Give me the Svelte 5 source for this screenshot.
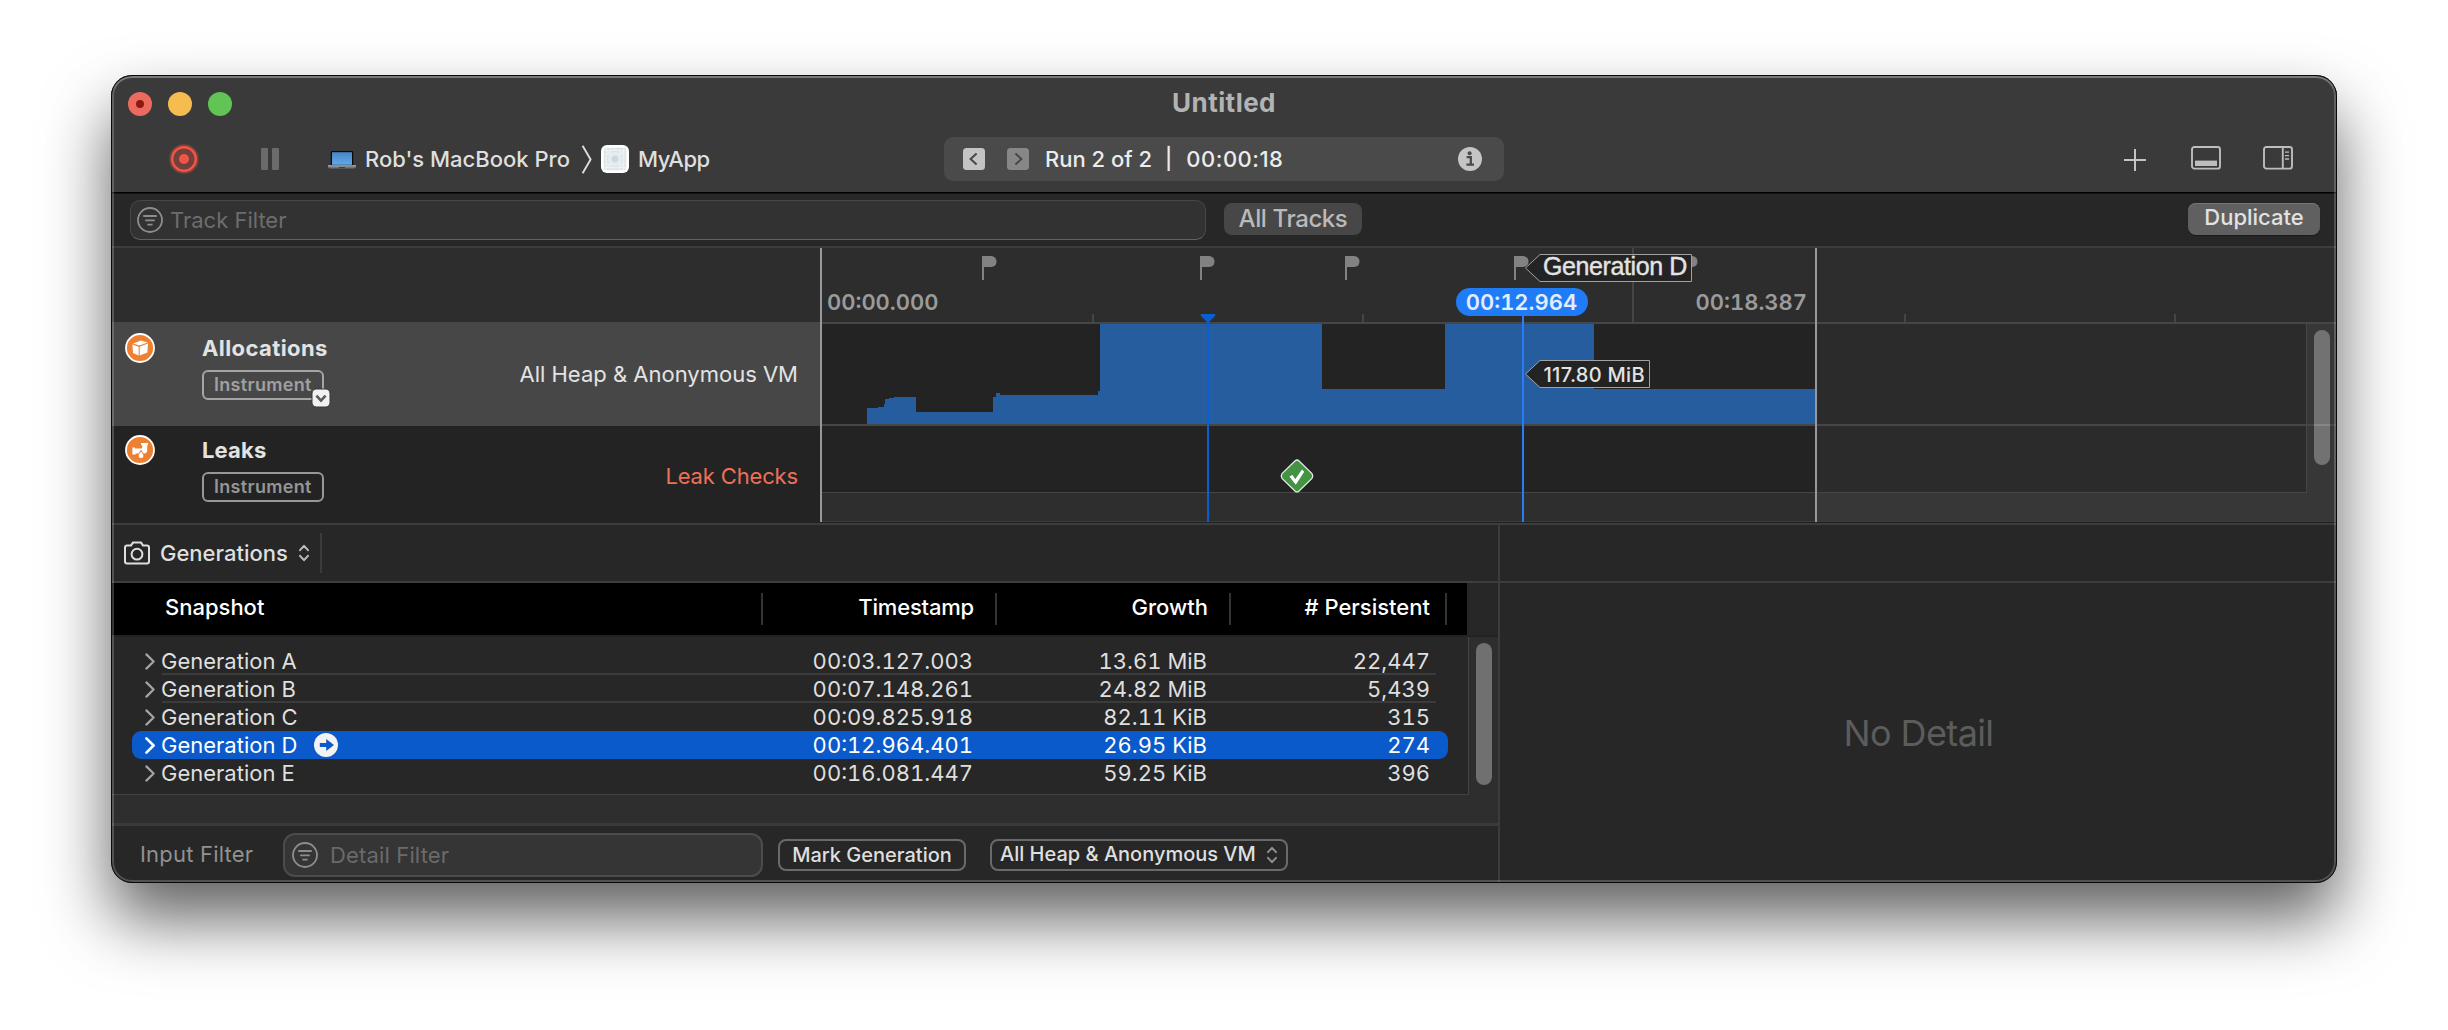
<script>
  const flags = [982, 1200, 1345, 1514, 1683];
  const ticks = [1092, 1362, 1904, 2174];

  // Outline of the heap usage graph, in canvas coordinates.
  const usage = [
    [867, 424], [867, 408], [878, 408], [878, 407], [884, 407], [884, 404], [885, 404], [885, 399],
    [889, 399], [889, 398], [894, 398], [894, 397], [916, 397], [916, 412], [993, 412], [993, 397],
    [996, 397], [996, 393], [1000, 393], [1000, 395], [1098, 395], [1098, 391], [1100, 391], [1100, 324],
    [1322, 324], [1322, 389], [1445, 389], [1445, 324], [1594, 324], [1594, 389], [1816, 389], [1816, 424]
  ].map((p) => p.join(',')).join(' ');

  const rows = [
    { name: 'Generation A', time: '00:03.127.003', growth: '13.61 MiB', count: '22,447', line: true },
    { name: 'Generation B', time: '00:07.148.261', growth: '24.82 MiB', count: '5,439', line: true },
    { name: 'Generation C', time: '00:09.825.918', growth: '82.11 KiB', count: '315' },
    { name: 'Generation D', time: '00:12.964.401', growth: '26.95 KiB', count: '274', selected: true },
    { name: 'Generation E', time: '00:16.081.447', growth: '59.25 KiB', count: '396' }
  ];
</script>

{#snippet filterIcon(size)}
  <svg class="filter-icon" width={size} height={size} viewBox="0 0 26 26" fill="none" stroke="#8d8d8d">
    <circle cx="13" cy="13" r="12" stroke-width="1.8" />
    <path d="M6.2 9H19.8M8.2 13.4H17.8M10.4 17.6H15.6" stroke-width="1.9" />
  </svg>
{/snippet}

{#snippet upDown(color)}
  <svg width="12" height="18" viewBox="0 0 12 18" fill="none" stroke={color} stroke-width="2" stroke-linecap="round" stroke-linejoin="round">
    <path d="M2 6.2L6 1.8L10 6.2M2 11.8L6 16.2L10 11.8" />
  </svg>
{/snippet}

<main class="window">
  <header class="toolbar">
    <div class="title-row">
      <div class="lights"><i class="red"></i><i class="yellow"></i><i class="green"></i></div>
      <h1>Untitled</h1>
    </div>
    <div class="tool-row">
      <div class="tool-left">
        <svg class="record" width="30" height="30" viewBox="0 0 30 30">
          <circle cx="15" cy="15" r="14.8" fill="#7a423c" />
          <circle cx="15" cy="15" r="11.8" fill="#70413c" stroke="#f05545" stroke-width="2.4" />
          <circle cx="15" cy="15" r="5" fill="#f05545" />
        </svg>
        <svg class="pause" width="18" height="22" viewBox="0 0 18 22" fill="#6b6b6b">
          <rect width="7" height="22" rx="1.2" /><rect x="11" width="7" height="22" rx="1.2" />
        </svg>
        <svg class="laptop" width="28" height="18" viewBox="0 0 28 18">
          <defs><linearGradient id="screen" x1="0" y1="0" x2="0" y2="1"><stop offset="0" stop-color="#4587c6" /><stop offset="1" stop-color="#64a8e8" /></linearGradient></defs>
          <rect x="2.8" y="0" width="22.4" height="15" rx="1.2" fill="#0a0a0c" />
          <rect x="4" y="1.2" width="20" height="12.6" fill="url(#screen)" />
          <path d="M0 14.4H28V16Q27.4 17.6 25.6 17.6H2.4Q.6 17.6 0 16Z" fill="#6f7376" />
          <path d="M0 14.2H28V15.6H0Z" fill="#a6aaad" /><path d="M11 16H17V17H11Z" fill="#3d4043" />
        </svg>
        <span class="device">Rob's MacBook Pro</span>
        <svg class="crumb" width="12" height="29" viewBox="0 0 12 29" fill="none" stroke="#dcdcdc" stroke-width="1.9"><path d="M1.6 .8L9.6 14.5L1.6 28.2" /></svg>
        <svg class="app-icon" width="28" height="28" viewBox="0 0 28 28">
          <rect width="28" height="28" rx="6" fill="#fff" />
          <rect x="2.8" y="2.8" width="22.4" height="22.4" rx="3" fill="#dbe4e7" />
          <g fill="none" stroke="#eff4f5" stroke-width=".8">
            <circle cx="14" cy="14" r="9.4" /><circle cx="14" cy="14" r="6.4" /><circle cx="14" cy="14" r="4" />
            <path d="M3 9H25M3 19H25M9 3V25M19 3V25M3 3L25 25M25 3L3 25M5.5 3V25M22.5 3V25M3 5.5H25M3 22.5H25" />
          </g>
          <circle cx="14" cy="14" r="3.4" fill="#cddadd" />
        </svg>
        <span class="app">MyApp</span>
      </div>
      <div class="run-box">
        <svg width="22" height="22" viewBox="0 0 22 22" fill="none"><rect width="22" height="22" rx="3.5" fill="#c3c3c3" /><path d="M13.6 5.4L7.6 11L13.6 16.6" stroke="#474747" stroke-width="2" /></svg>
        <svg class="next" width="22" height="22" viewBox="0 0 22 22" fill="none"><rect width="22" height="22" rx="3.5" fill="#878787" /><path d="M8.4 5.4L14.4 11L8.4 16.6" stroke="#474747" stroke-width="2" /></svg>
        <span class="run">Run 2 of 2</span><span class="bar">|</span><span class="clock">00:00:18</span>
        <svg class="info" width="24" height="24" viewBox="0 0 24 24"><circle cx="12" cy="12" r="12" fill="#c5c5c5" /><circle cx="11.6" cy="6.2" r="2" fill="#4a4a4a" /><path d="M8.6 10.2H12.8V17.4M8.4 17.6H16" fill="none" stroke="#4a4a4a" stroke-width="2.3" /></svg>
      </div>
      <div class="tool-right">
        <svg width="22" height="22" viewBox="0 0 22 22" stroke="#c4c4c4" stroke-width="2"><path d="M11 0V22M0 11H22" /></svg>
        <svg class="panel" width="30" height="24" viewBox="0 0 30 24"><rect x="1" y="1" width="28" height="21.6" rx="2.4" fill="none" stroke="#bdbdbd" stroke-width="1.9" /><rect x="4" y="14.6" width="22" height="5.4" fill="#bdbdbd" /></svg>
        <svg class="panel" width="30" height="24" viewBox="0 0 30 24" fill="none" stroke="#bdbdbd" stroke-width="1.9"><rect x="1" y="1" width="28" height="21.6" rx="2.4" /><path d="M19.8 1V22.6" /><path d="M22 6.2H26M22 9.6H26M22 13H26" stroke-width="1.3" /></svg>
      </div>
    </div>
  </header>

  <div class="filter-row">
    <div class="track-filter">{@render filterIcon(26)}<span>Track Filter</span></div>
    <button class="all-tracks">All Tracks</button>
    <button class="duplicate">Duplicate</button>
  </div>

  <section class="timeline">
    <div class="tracks">
      <div class="ruler-space"></div>
      <div class="track allocations">
        <svg width="30" height="30" viewBox="0 0 30 30">
          <circle cx="15" cy="15" r="14" fill="#ee8032" stroke="#fff" stroke-width="1.8" />
          <path d="M8 10.6L16 7.6L22.6 9.4L14.4 12.6Z" fill="#fff" />
          <path d="M7.4 11.6L13.6 13.7V22.4L8 19.9Z" fill="#fff" /><path d="M14.7 13.7L23 10.6L22.4 19.4L14.7 22.4Z" fill="#fff" />
        </svg>
        <div class="track-name">
          <h2>Allocations</h2>
          <span class="badge">Instrument
            <svg class="badge-menu" width="20" height="20" viewBox="0 0 20 20"><rect x="1" y="1" width="18" height="18" rx="4.5" fill="#f1f1f1" stroke="#393939" stroke-width="1" /><path d="M5.4 7.6L10 12.6L14.6 7.6" fill="none" stroke="#5a5a5a" stroke-width="2.6" /></svg>
          </span>
        </div>
        <span class="track-detail heap">All Heap &amp; Anonymous VM</span>
      </div>
      <div class="track leaks">
        <svg width="30" height="30" viewBox="0 0 30 30">
          <circle cx="15" cy="15" r="14" fill="#ee8032" stroke="#fff" stroke-width="1.8" />
          <path d="M16.2 8H23V10.2H22.2V15.6Q22.2 18.4 19.4 18.4H18.6L16 14.8L13.4 18.4H10.6V19.6H7.4V12.4H9.8V13.6H16.4Q17.2 13.6 17.2 12.8V10.2H16.2Z" fill="#fff" />
          <path d="M16 15.8Q13.2 19.4 13.2 21Q13.4 23.4 16 23.6Q18.8 23.4 18.8 21Q18.8 19.4 16 15.8Z" fill="#fff" stroke="#ee8032" stroke-width=".8" />
        </svg>
        <div class="track-name"><h2>Leaks</h2><span class="badge">Instrument</span></div>
        <span class="track-detail checks">Leak Checks</span>
      </div>
    </div>

    <svg class="canvas" width="1517" height="275" viewBox="820 248 1517 275">
      <rect x="820" y="248" width="1517" height="74" fill="#2d2d2d" />
      <rect x="820" y="322" width="997" height="170" fill="#232323" />
      <rect x="1817" y="322" width="489" height="170" fill="#2b2b2b" />
      <rect x="820" y="492" width="997" height="30" fill="#2e2e2e" />
      <path d="M1817 492H2306V322H2337V522H1817Z" fill="#373737" />
      <path d="M820 492.5H2306.5V324" fill="none" stroke="#464646" />
      <path d="M820 521.5H2337" stroke="#3b3b3b" /><path d="M820 522.5H2337" stroke="#202020" />
      {#each ticks as x}<rect {x} y="314" width="2" height="8" fill="#454545" />{/each}
      <rect x="1632" y="248" width="2" height="74" fill="#454545" />
      <rect x="820" y="322" width="1517" height="2" fill="#464646" />
      <rect x="2314" y="330" width="16" height="135" rx="8" fill="#727272" />
      <polygon points={usage} fill="#265d9f" shape-rendering="crispEdges" />
      <rect x="820" y="424" width="1517" height="2" fill="#464646" />
      <rect x="2314" y="424" width="16" height="2" fill="#868686" />
      {#each flags as x}
        <path d="M{x} 256h9q5.5 .5 5.5 5.5t-5.5 5.5h-7v13h-2z" fill="#828282" />
      {/each}
      <text class="time" x="827" y="310">00:00.000</text>
      <text class="time" x="1807" y="310" text-anchor="end">00:18.387</text>
      <rect x="1207" y="320" width="2" height="202" fill="#0b5ed2" />
      <path d="M1201 314H1215V316L1208 323L1201 316Z" fill="#0b5ed2" />
      <g>
        <path d="M1295.2 460.8Q1297 459.2 1298.8 460.8L1312 473.6Q1313.6 476 1312 478.4L1298.8 491.2Q1297 492.6 1295.2 491.2L1282 478.4Q1280.4 476 1282 473.6Z" fill="#449343" stroke="#e9f3e9" stroke-width="1.2" />
        <path d="M1289.4 476.4L1292.6 475L1295.2 479.2L1302 469.6L1304.2 471.8L1295.8 484.8Z" fill="#fff" />
      </g>
      <rect x="820" y="248" width="2" height="274" fill="#98989a" />
      <rect x="1815" y="248" width="2" height="274" fill="#98989c" />
      <rect x="1522" y="314" width="2" height="208" fill="#2a7df4" />
      <rect x="1456" y="288" width="132" height="28" rx="14" fill="#207bf7" />
      <text class="time now" x="1521.5" y="310" text-anchor="middle">00:12.964</text>
      <path d="M1525.5 268L1540 254.5H1691.5V281.5H1540Z" fill="#232323" stroke="#a2a2a2" />
      <text class="flag-name" x="1543" y="275">Generation D</text>
      <path d="M1525.5 374L1540 360.5H1649.5V387.5H1540Z" fill="#232323" stroke="#a2a2a2" />
      <text class="amount" x="1543.5" y="382">117.80 MiB</text>
    </svg>
  </section>

  <section class="detail">
    <div class="detail-left">
      <div class="detail-bar">
        <svg width="26" height="24" viewBox="0 0 26 24" fill="none" stroke="#dedede" stroke-width="2"><path d="M3 4.4H7L9 1.6H17L19 4.4H23Q25 4.4 25 6.4V20.6Q25 22.6 23 22.6H3Q1 22.6 1 20.6V6.4Q1 4.4 3 4.4Z" /><circle cx="13" cy="13.2" r="5.4" /></svg>
        <span class="view-name">Generations</span>
        {@render upDown('#bdbdbd')}
        <i class="divider"></i>
      </div>
      <div class="table-area">
        <div class="grid head">
          <span class="snapshot">Snapshot</span><span class="stamp">Timestamp</span><span class="growth">Growth</span><span class="persist"># Persistent</span>
        </div>
        <div class="table-body">
          <div class="rows">
            {#each rows as r}
              <div class="grid row" class:selected={r.selected} class:line={r.line}>
                <span class="name">
                  <svg width="10" height="17" viewBox="0 0 10 17" fill="none" stroke={r.selected ? '#fff' : '#a4a4a4'} stroke-width={r.selected ? 2.6 : 2.2} stroke-linecap="round" stroke-linejoin="round"><path d="M1.4 1.4L8.6 8.5L1.4 15.6" /></svg>
                  {r.name}
                  {#if r.selected}
                    <svg class="go" width="24" height="24" viewBox="0 0 24 24"><circle cx="12" cy="12" r="12" fill="#f3f3f3" /><path d="M5.8 10H12.2V6L20 12L12.2 18V14H5.8Z" fill="#0a5acb" /></svg>
                  {/if}
                </span>
                <span class="num">{r.time}</span><span class="num">{r.growth}</span><span class="num">{r.count}</span>
              </div>
            {/each}
          </div>
          <div class="gutter"><i></i></div>
        </div>
        <div class="table-foot"></div>
      </div>
      <footer>
        <span class="input-label">Input Filter</span>
        <div class="detail-filter">{@render filterIcon(26)}<span>Detail Filter</span></div>
        <button class="mark">Mark Generation</button>
        <button class="scope"><span>All Heap &amp; Anonymous VM</span>{@render upDown('#8f8f8f')}</button>
      </footer>
    </div>
    <div class="detail-right">
      <div class="empty-bar"></div>
      <div class="empty">No Detail</div>
    </div>
  </section>
</main>

<style>
  :global(body) { background: #fff; }
  :global(#app) { display: flex; justify-content: center; height: 1030px; overflow: hidden; }
  * { box-sizing: border-box; }
  svg { display: block; flex: none; }
  button { appearance: none; border: 0; padding: 0; margin: 0; font: inherit; color: inherit; background: none; }
  h1, h2 { margin: 0; }

  .window {
    position: relative;
    display: flex;
    flex-direction: column;
    width: 2226px;
    height: 808px;
    margin-top: 75px;
    border-radius: 21px;
    overflow: hidden;
    background: #272727;
    color: #dfdfdf;
    font: 400 22px/28px Inter, 'Liberation Sans', sans-serif;
    white-space: nowrap;
    box-shadow: 0 36px 66px rgba(0, 0, 0, .62);
  }
  .window::after {
    content: '';
    position: absolute;
    inset: 0;
    border: 1px solid #080a08;
    border-radius: 21px;
    box-shadow: inset 0 0 0 2px rgba(255, 255, 255, .2), inset 0 2px 0 rgba(255, 255, 255, .16);
    pointer-events: none;
  }

  .toolbar { height: 118px; background: #3a3a3a; border-bottom: 1px solid #000; box-shadow: 0 1px 0 #151515; position: relative; flex: none; }
  .title-row { display: grid; grid-template-columns: 1fr auto 1fr; height: 58px; align-items: center; }
  .lights { display: flex; gap: 16px; padding-left: 17px; }
  .lights i { width: 24px; height: 24px; border-radius: 50%; display: grid; place-items: center; }
  .red { background: #ed6a5f; }
  .red::before { content: ''; width: 8px; height: 8px; border-radius: 50%; background: #8c1a10; }
  .yellow { background: #f5bd4f; }
  .green { background: #61c454; }
  h1 { font-size: 26px; font-weight: 700; line-height: 30px; letter-spacing: .44px; color: #b3b3b3; padding-bottom: 2px; }

  .tool-row { display: grid; grid-template-columns: 1fr 560px 1fr; height: 52px; align-items: center; font-weight: 500; }
  .tool-left { display: flex; align-items: center; padding-left: 58px; }
  .pause { margin-left: 62px; }
  .laptop { margin: 2px 9px 0 49px; }
  .crumb { margin: 0 8px 0 11px; }
  .app { margin-left: 9px; letter-spacing: -.5px; }
  .run-box { display: flex; align-items: center; height: 44px; border-radius: 9px; background: #4a4a4a; padding: 0 22px 0 19px; color: #ececec; }
  .next { margin: 0 16px 0 22px; }
  .bar { margin: 0 14px 0 13px; line-height: 24px; font-size: 21px; }
  .clock { letter-spacing: .5px; }
  .info { margin-left: auto; }
  .tool-right { display: flex; align-items: center; justify-content: flex-end; padding-right: 44px; gap: 42px; }
  .tool-right svg:first-child { margin: 2px 3px 0 0; }
  .panel { margin-top: -2px; }

  .filter-row { display: flex; align-items: center; height: 55px; border-bottom: 2px solid #3c3c3c; padding: 0 17px 0 19px; flex: none; }
  .track-filter { display: flex; align-items: center; width: 1076px; height: 40px; background: #323232; border: 1px solid #474747; border-bottom-color: #636363; border-radius: 10px; padding-left: 6px; gap: 7px; color: #6d6d6d; }
  .all-tracks { width: 138px; height: 32px; margin: 0 0 1px 18px; border-radius: 8px; background: #474747; color: #bababa; font-size: 24px; font-weight: 500; letter-spacing: -.4px; line-height: 32px; }
  .duplicate { width: 132px; height: 32px; margin: 0 0 1px auto; border-radius: 8px; background: #606060; color: #e2e2e2; font-weight: 500; line-height: 28px; padding-bottom: 4px; box-shadow: inset 0 1px 0 #757575, 0 1px 1px #1a1a1a; }

  .timeline { display: flex; height: 277px; border-bottom: 2px solid #3d3d3d; flex: none; }
  .tracks { width: 709px; }
  .ruler-space { height: 74px; background: #2d2d2d; }
  .track { display: flex; padding: 12px 22px 0 14px; }
  .track > svg { margin-top: -1px; }
  .allocations { height: 104px; background: #474747; }
  .leaks { height: 97px; background: #232323; padding-top: 10px; }
  .track-name { margin-left: 47px; display: flex; flex-direction: column; align-items: flex-start; gap: 8px; }
  h2 { font-size: 22px; font-weight: 700; line-height: 28px; letter-spacing: .4px; color: #e3e3e3; }
  .leaks h2 { letter-spacing: .15px; }
  .badge { position: relative; display: block; width: 122px; height: 30px; border: 2px solid #a5a5a5; border-radius: 6px; font-size: 18px; font-weight: 600; line-height: 26px; letter-spacing: .3px; padding-left: 10px; color: #a0a0a0; }
  .leaks .badge { color: #959595; border-color: #979797; }
  .badge-menu { position: absolute; right: -9px; bottom: -10px; }
  .track-detail { margin: 26px 0 0 auto; height: 28px; color: #e3e3e3; }
  .checks { color: #ed7058; letter-spacing: -.15px; }

  .time { font: 600 22px Inter, sans-serif; font-feature-settings: 'tnum'; letter-spacing: 0; fill: #9b9b9b; }
  .now { fill: #e2edfd; }
  .flag-name { font: 400 25px 'Liberation Sans', sans-serif; letter-spacing: -.4px; fill: #e3e3e3; stroke: #e3e3e3; stroke-width: .4px; }
  .amount { font: 500 20px Inter, sans-serif; letter-spacing: .3px; fill: #e3e3e3; }

  .detail { display: flex; flex: 1; }
  .detail-left { display: flex; flex-direction: column; width: 1389px; border-right: 2px solid #3c3c3c; }
  .detail-right { display: flex; flex-direction: column; flex: 1; }
  .detail-bar { display: flex; align-items: center; height: 58px; border-bottom: 2px solid #3d3d3d; padding-left: 13px; font-weight: 500; }
  .detail-bar > svg:first-child { margin-right: 10px; }
  .view-name { margin-right: 10px; }
  .divider { width: 2px; height: 40px; margin-left: 10px; background: #3b3b3b; }

  .table-area { height: 243px; display: flex; flex-direction: column; border-bottom: 3px solid #3a3a3a; }
  .grid { display: grid; grid-template-columns: 1fr 234px 234px 223px; }
  .head { width: 1356px; height: 52px; background: #000; color: #fff; font-weight: 500; line-height: 48px; padding-right: 20px; flex: none; }
  .head span { text-align: right; background: linear-gradient(#333, #333) right 10px / 2px 32px no-repeat; height: 52px; margin-right: 0; }
  .head .snapshot { text-align: left; padding-left: 54px; background-position: 650px 10px; }
  .head span { background-position: right 10px; }
  .head .snapshot { background-position: right 10px; }
  .head .stamp { padding-right: 23px; letter-spacing: -.2px; }
  .head .growth { padding-right: 23px; }
  .head .persist { padding-right: 17px; }
  .head { grid-template-columns: 652px 234px 234px 216px; }
  .table-body { display: flex; flex: 1; border-top: 2px solid #222; }
  .rows { width: 1358px; padding: 10px 20px 0 21px; border-right: 1px solid #434343; border-bottom: 1px solid #434343; }
  .row { position: relative; height: 28px; padding: 0 18px 0 13px; border-radius: 9px; grid-template-columns: 1fr 234px 234px 223px; }
  .row.line { background: linear-gradient(#3b3b3b, #3b3b3b) 30px 26px / 1274px 2px no-repeat; }
  .row.selected { background: #0a5acb; color: #fff; }
  .name { display: flex; align-items: center; gap: 6px; }
  .go { margin-left: 11px; }
  .num { text-align: right; font-feature-settings: 'tnum'; }
  .gutter { flex: 1; background: #2e2e2e; padding: 6px 0 0 7px; }
  .gutter i { display: block; width: 16px; height: 142px; border-radius: 8px; background: #707070; }
  .table-foot { height: 28px; background: #2e2e2e; }

  footer { display: flex; align-items: center; height: 57px; padding-left: 29px; }
  .input-label { width: 143px; color: #919191; letter-spacing: .2px; padding-bottom: 2px; }
  .detail-filter { display: flex; align-items: center; width: 480px; height: 44px; background: #353535; border: 2px solid #4c4c4c; border-radius: 12px; padding-left: 7px; gap: 12px; color: #6a6a6a; letter-spacing: .15px; }
  .mark, .scope { height: 32px; border: 2px solid #6a6a6a; border-radius: 8px; font-size: 20px; font-weight: 500; line-height: 28px; }
  .mark { width: 188px; margin-left: 15px; }
  .scope { width: 298px; margin-left: 24px; display: flex; align-items: center; justify-content: space-between; padding: 0 8px; }
  .scope span { padding-bottom: 2px; }

  .empty-bar { height: 58px; border-bottom: 2px solid #3d3d3d; }
  .empty { flex: 1; display: grid; place-items: center; font-size: 36px; letter-spacing: -.6px; color: #5c5c5c; line-height: 44px; }
</style>
